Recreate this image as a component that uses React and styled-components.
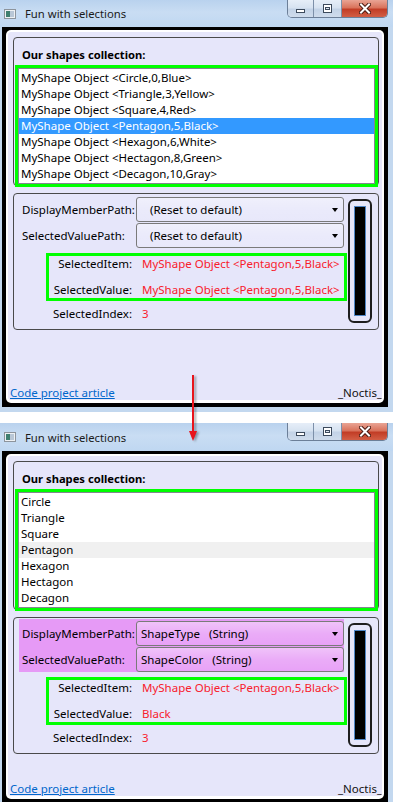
import React from "react";
import styled, { createGlobalStyle } from "styled-components";

const GlobalStyle = createGlobalStyle`
  html, body {
    margin: 0;
    padding: 0;
    background: #fff;
  }
  body {
    width: 393px;
    height: 802px;
    overflow: hidden;
    font-family: "Noto Sans", "Open Sans", sans-serif;
    font-size: 11.5px;
    color: #000;
  }
`;

const Page = styled.div`
  position: relative;
  display: flex;
  flex-direction: column;
  gap: 11px;
  width: 393px;
`;

const Window = styled.div`
  display: flex;
  flex-direction: column;
  padding: 0 5px 5px 2px;
  background: #c3d8ef;
`;

const TitleBar = styled.div`
  display: flex;
  align-items: center;
  height: ${(p) => p.$height}px;
  margin: 0 -5px 0 -2px;
  padding: 0 5px 0 2px;
  background: linear-gradient(180deg, #b9d2ee 0%, #c9ddf3 45%, #bfd7f1 100%);
`;

const AppIcon = styled.svg`
  flex: none;
  margin-left: 2px;
`;

const Title = styled.span`
  margin-left: 9px;
  font-size: 11.3px;
  color: #1b1b1b;
  white-space: nowrap;
`;

const Caption = styled.div`
  align-self: flex-start;
  margin-left: auto;
  display: flex;
  height: 17px;
  border: 1px solid #6c7f98;
  border-top: none;
  border-radius: 0 0 5px 5px;
  overflow: hidden;
`;

const CaptionButton = styled.div`
  width: ${(p) => p.$w}px;
  display: flex;
  align-items: center;
  justify-content: center;
  background: ${(p) =>
    p.$close
      ? "linear-gradient(180deg, #e9a494 0%, #d9735c 45%, #c23d26 55%, #d25e45 100%)"
      : "linear-gradient(180deg, #e6eef8 0%, #d7e3f1 45%, #c3d3e7 55%, #cfdcec 100%)"};
  & + & {
    border-left: 1px solid #7d90a9;
  }
`;

const Frame = styled.div`
  background: #000;
  padding: 3px 4px 4px 4px;
`;

const Ring = styled.div`
  background: #fff;
  padding: 2px 2px 3px 2px;
  border-radius: 5px;
`;

const Client = styled.div`
  box-sizing: border-box;
  height: ${(p) => p.$height}px;
  display: flex;
  flex-direction: column;
  gap: 7px;
  padding: 5px 3px 0 5px;
  background: #e6e6fa;
  border-radius: 3px;
  overflow: hidden;
`;

const GroupBox = styled.div`
  border: 1px solid #4a4a4a;
  border-radius: 4px;
`;

const GroupHeader = styled.div`
  padding: 9px 0 2px 8px;
  font-weight: bold;
  font-size: 11.2px;
  line-height: 16px;
`;

const Outline = styled.div`
  border: 3px solid #00ff00;
`;

const ListFrame = styled(Outline)`
  margin: 0 0 -2px 1px;
`;

const ListBox = styled.div`
  border: 1px solid #828790;
  background: #fff;
  padding: 1px 0;
`;

const ListItem = styled.div`
  height: 16px;
  line-height: 16px;
  padding-left: 2px;
  white-space: nowrap;
  background: ${(p) =>
    p.$state === "active" ? "#3399ff" : p.$state === "inactive" ? "#f0f0f0" : "transparent"};
  color: ${(p) => (p.$state === "active" ? "#fff" : "#000")};
`;

const Settings = styled.div`
  display: grid;
  grid-template-columns: 325px 24px;
  column-gap: 4px;
  padding: 1px 6px 7px 5px;
`;

const LeftColumn = styled.div`
  display: flex;
  flex-direction: column;
`;

const PathPanel = styled.div`
  display: grid;
  grid-template-columns: 114px 208px;
  row-gap: 1px;
  align-items: center;
  padding: 2px 0 0 3px;
  background: ${(p) => (p.$highlight ? "#e69af6" : "transparent")};
`;

const Label = styled.span`
  white-space: nowrap;
  line-height: 16px;
  text-align: ${(p) => (p.$right ? "right" : "left")};
`;

const Combo = styled.div`
  box-sizing: border-box;
  height: 25px;
  display: flex;
  align-items: center;
  padding-left: ${(p) => p.$indent}px;
  border: 1px solid #7a7a7a;
  border-radius: 3px;
  background: linear-gradient(
    180deg,
    rgba(255, 255, 255, 0.4) 0%,
    rgba(255, 255, 255, 0.18) 50%,
    rgba(255, 255, 255, 0.08) 100%
  );
  white-space: pre;
`;

const ComboArrow = styled.span`
  margin-left: auto;
  margin-right: 5px;
  border-left: 3.5px solid transparent;
  border-right: 3.5px solid transparent;
  border-top: 4px solid #000;
`;

const SelectionBox = styled(Outline)`
  margin: 5px -3px 0 27px;
`;

const ValueRow = styled.div`
  display: grid;
  grid-template-columns: ${(p) => p.$labelWidth}px 1fr;
  column-gap: 10px;
  height: 16px;
  align-items: center;
  margin-top: ${(p) => p.$top || 0}px;
`;

const Value = styled.span`
  color: #f8202c;
  white-space: nowrap;
  line-height: 16px;
`;

const Indicator = styled.div`
  display: flex;
  margin: 4px 0 -1px;
  padding: 5px 4px;
  border: 2px solid #1e1e1e;
  border-radius: 6px;
`;

const IndicatorFill = styled.div`
  flex: 1;
  background: #000;
  border: 1px solid #4f86c6;
`;

const Footer = styled.div`
  margin: auto -3px 0 -3px;
  display: flex;
  justify-content: space-between;
  line-height: 15px;
`;

const ArticleLink = styled.a`
  color: #0066cc;
  text-decoration: underline;
`;

const Signature = styled.span`
  color: #111;
`;

const Arrow = styled.svg`
  position: absolute;
  left: 188px;
  top: 375px;
  filter: drop-shadow(2px 1px 1px rgba(0, 0, 0, 0.35));
`;

const shapes = [
  ["Circle", 0, "Blue"],
  ["Triangle", 3, "Yellow"],
  ["Square", 4, "Red"],
  ["Pentagon", 5, "Black"],
  ["Hexagon", 6, "White"],
  ["Hectagon", 8, "Green"],
  ["Decagon", 10, "Gray"],
];

const asObject = ([type, sides, color]) => `MyShape Object <${type},${sides},${color}>`;

const windows = [
  {
    titleHeight: 27,
    clientHeight: 368,
    itemText: asObject,
    selection: "active",
    highlightPaths: false,
    indent: 13,
    displayPath: "(Reset to default)",
    valuePath: "(Reset to default)",
    selectedValue: "MyShape Object <Pentagon,5,Black>",
  },
  {
    titleHeight: 28,
    clientHeight: 340,
    itemText: ([type]) => type,
    selection: "inactive",
    highlightPaths: true,
    indent: 4,
    displayPath: "ShapeType   (String)",
    valuePath: "ShapeColor   (String)",
    selectedValue: "Black",
  },
];

const WindowIcon = () => (
  <AppIcon width="12" height="10" viewBox="0 0 12 10">
    <rect x="0.5" y="0.5" width="11" height="9" fill="#eef1f4" stroke="#8d949c" />
    <rect x="2" y="2" width="4" height="6" fill="#3f7f70" />
    <rect x="6" y="2" width="4" height="6" fill="#b9c7d6" />
  </AppIcon>
);

const CaptionButtons = () => (
  <Caption>
    <CaptionButton $w={25}>
      <svg width="11" height="10" viewBox="0 0 11 10">
        <rect x="1.5" y="5.5" width="8" height="3" fill="#fff" stroke="#3c4a5c" />
      </svg>
    </CaptionButton>
    <CaptionButton $w={27}>
      <svg width="11" height="10" viewBox="0 0 11 10">
        <rect x="1.5" y="0.5" width="8" height="8" fill="#fff" stroke="#3c4a5c" />
        <rect x="3.5" y="3.5" width="4" height="2" fill="#dfe7f1" stroke="#3c4a5c" />
      </svg>
    </CaptionButton>
    <CaptionButton $w={45} $close>
      <svg width="12" height="11" viewBox="0 0 12 11">
        <path d="M2 1.5 L10 9.5 M10 1.5 L2 9.5" stroke="#4a1a12" strokeWidth="4" strokeLinecap="square" />
        <path d="M2 1.5 L10 9.5 M10 1.5 L2 9.5" stroke="#fff" strokeWidth="2" strokeLinecap="square" />
      </svg>
    </CaptionButton>
  </Caption>
);

const SelectionWindow = ({ config }) => (
  <Window>
    <TitleBar $height={config.titleHeight}>
      <WindowIcon />
      <Title>Fun with selections</Title>
      <CaptionButtons />
    </TitleBar>
    <Frame>
      <Ring>
        <Client $height={config.clientHeight}>
          <GroupBox>
            <GroupHeader>Our shapes collection:</GroupHeader>
            <ListFrame>
              <ListBox>
                {shapes.map((s, i) => (
                  <ListItem key={s[0]} $state={i === 3 ? config.selection : null}>
                    {config.itemText(s)}
                  </ListItem>
                ))}
              </ListBox>
            </ListFrame>
          </GroupBox>

          <GroupBox>
            <Settings>
              <LeftColumn>
                <PathPanel $highlight={config.highlightPaths}>
                  <Label>DisplayMemberPath:</Label>
                  <Combo $indent={config.indent}>
                    {config.displayPath}
                    <ComboArrow />
                  </Combo>
                  <Label>SelectedValuePath:</Label>
                  <Combo $indent={config.indent}>
                    {config.valuePath}
                    <ComboArrow />
                  </Combo>
                </PathPanel>
                <SelectionBox>
                  <ValueRow $labelWidth={83}>
                    <Label $right>SelectedItem:</Label>
                    <Value>MyShape Object &lt;Pentagon,5,Black&gt;</Value>
                  </ValueRow>
                  <ValueRow $labelWidth={83} $top={10}>
                    <Label $right>SelectedValue:</Label>
                    <Value>{config.selectedValue}</Value>
                  </ValueRow>
                </SelectionBox>
                <ValueRow $labelWidth={113} $top={5}>
                  <Label $right>SelectedIndex:</Label>
                  <Value>3</Value>
                </ValueRow>
              </LeftColumn>
              <Indicator>
                <IndicatorFill />
              </Indicator>
            </Settings>
          </GroupBox>

          <Footer>
            <ArticleLink href="#">Code project article</ArticleLink>
            <Signature>_Noctis_</Signature>
          </Footer>
        </Client>
      </Ring>
    </Frame>
  </Window>
);

export default function App() {
  return (
    <>
      <GlobalStyle />
      <Page>
        {windows.map((w, i) => (
          <SelectionWindow key={i} config={w} />
        ))}
        <Arrow width="12" height="68" viewBox="0 0 12 68">
          <line x1="5" y1="0" x2="5" y2="58" stroke="#e8141c" strokeWidth="2" />
          <polygon points="1,56 9,56 5,66" fill="#e8141c" />
        </Arrow>
      </Page>
    </>
  );
}
